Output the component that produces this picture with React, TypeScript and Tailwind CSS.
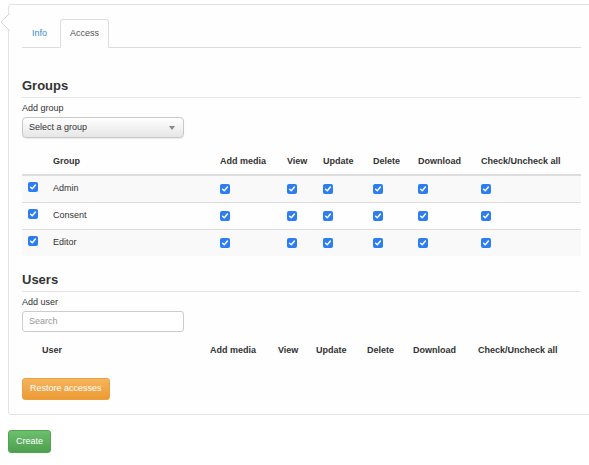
import React from "react";

const groups = ["Admin", "Consent", "Editor"];
const groupCols = "grid grid-cols-[31px_167px_67px_36px_50px_45px_63px_1fr]";
const userCols = "grid grid-cols-[20px_168px_68px_38px_51px_46px_65px_1fr]";
const perms = ["Add media", "View", "Update", "Delete", "Download", "Check/Uncheck all"];

const Check = () => (
  <span className="inline-flex items-center justify-center w-[10px] h-[10px] rounded-[2px] bg-[#2c7cf4]">
    <svg width="8" height="8" viewBox="0 0 8 8">
      <path d="M1.6 4.2 L3.3 5.8 L6.4 2.1" fill="none" stroke="white" strokeWidth="1.5" strokeLinecap="round" strokeLinejoin="round" />
    </svg>
  </span>
);

const App = () => {
  return (
    <div className="min-h-[465px] bg-white overflow-hidden font-['Liberation_Sans',Arial,sans-serif] text-[9px] text-[#333]">
      <div className="pt-[4px] pl-[8px]">
        <div className="relative w-[600px] border border-[#e3e3e3] rounded-[3px] bg-[#fefefe] pt-[14px] pl-[13px] pr-[26px] pb-[14px]">
          {/* pointer arrow */}
          <svg className="absolute left-[-9px] top-[8px]" width="10" height="18" viewBox="0 0 10 18">
            <polygon points="10,0 1,9 10,18" fill="#fefefe" />
            <polyline points="9.5,0.5 1,9 9.5,17.5" fill="none" stroke="#d6d6d6" strokeWidth="1" />
          </svg>

          {/* tabs */}
          <ul className="flex border-b border-[#ddd]">
            <li className="mb-[-1px] mr-[3px]">
              <span className="block px-[9px] leading-[27px] border border-transparent text-[#3a8ad6]">Info</span>
            </li>
            <li className="mb-[-1px]">
              <span className="block px-[9px] leading-[27px] border border-[#ddd] border-b-transparent rounded-t-[3px] bg-[#fefefe] text-[#555]">
                Access
              </span>
            </li>
          </ul>

          {/* Groups */}
          <h2 className="mt-[30px] pb-[4px] border-b border-[#e5e5e5] text-[13px] leading-[15px] font-bold">Groups</h2>
          <div className="mt-[4px] leading-[12px]">Add group</div>
          <div className="mt-[3px] w-[162px] h-[21px] flex items-center justify-between pl-[6px] pr-[8px] border border-[#c8c8c8] rounded-[4px] bg-gradient-to-b from-white to-[#e6e6e6] shadow-[0_1px_1px_rgba(0,0,0,0.08)]">
            <span>Select a group</span>
            <svg width="6" height="4" viewBox="0 0 6 4">
              <polygon points="0,0 6,0 3,4" fill="#888" />
            </svg>
          </div>

          <div className="mt-[11px]">
            <div className={`${groupCols} h-[27px] items-center border-b-2 border-[#ddd] font-bold`}>
              <span />
              <span>Group</span>
              {perms.map((p) => (
                <span key={p}>{p}</span>
              ))}
            </div>
            {groups.map((g, i) => (
              <div
                key={g}
                className={`${groupCols} items-center ${i === 0 ? "h-[26px]" : "h-[27px] border-t border-[#ddd]"} ${
                  i % 2 === 0 ? "bg-[#f9f9f9]" : "bg-[#fefefe]"
                }`}
              >
                <span className="pl-[6px] self-start mt-[6px] flex">
                  <Check />
                </span>
                <span>{g}</span>
                {perms.map((p) => (
                  <span key={p} className="flex">
                    <Check />
                  </span>
                ))}
              </div>
            ))}
          </div>

          {/* Users */}
          <h2 className="mt-[16px] pb-[4px] border-b border-[#e5e5e5] text-[13px] leading-[15px] font-bold">Users</h2>
          <div className="mt-[4px] leading-[12px]">Add user</div>
          <div className="mt-[3px] w-[162px] h-[21px] flex items-center pl-[6px] border border-[#ccc] rounded-[3px] bg-white text-[#999]">
            Search
          </div>

          <div className={`${userCols} mt-[5px] h-[27px] items-center font-bold`}>
            <span />
            <span>User</span>
            {perms.map((p) => (
              <span key={p}>{p}</span>
            ))}
          </div>

          <button className="mt-[14px] h-[22px] px-[7px] rounded-[3px] border border-[#e8a040] bg-gradient-to-b from-[#f5b45c] to-[#ec9a32] text-white text-[9px]">
            Restore accesses
          </button>
        </div>

        <button className="mt-[15px] h-[23px] px-[7px] rounded-[3px] border border-[#52a352] bg-gradient-to-b from-[#6cc06c] to-[#4e9f4e] text-white text-[9px]">
          Create
        </button>
      </div>
    </div>
  );
};

export default App;
